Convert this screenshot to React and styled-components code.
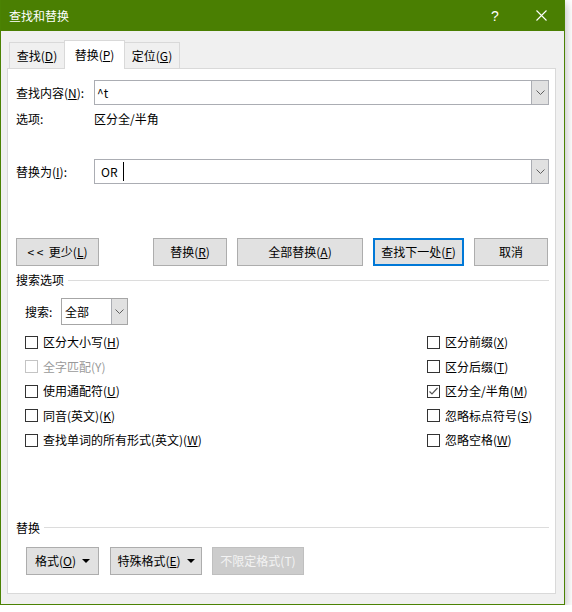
import React from "react";
import styled, { createGlobalStyle } from "styled-components";

const GlobalStyle = createGlobalStyle`
  html, body { margin: 0; padding: 0; background: #ffffff; }
  body {
    font-family: "Noto Sans CJK SC", "Noto Sans", sans-serif;
    font-size: 12px;
    color: #000;
  }
  * { box-sizing: border-box; }
`;

const Window = styled.div`
  width: 565px;
  height: 605px;
  background: #f0f0f0;
  border: 1px solid #4b8203;
  border-top: none;
  box-shadow: 1px 3px 9px rgba(0, 0, 0, 0.28);
  display: flex;
  flex-direction: column;
`;

const TitleBar = styled.div`
  height: 31px;
  background: #4a7f02;
  color: #fff;
  display: flex;
  align-items: center;
  padding-left: 8px;
  font-size: 12px;
  line-height: 16px;
`;

const TitleText = styled.div`
  flex: 1;
`;

const CtrlButton = styled.div`
  width: 46px;
  height: 31px;
  display: flex;
  align-items: center;
  justify-content: center;
  font-family: "Liberation Sans", "DejaVu Sans", sans-serif;
  font-size: 14px;
  color: #fff;
`;

const Tabs = styled.div`
  display: flex;
  align-items: flex-end;
  height: 28px;
  margin: 9px 0 0 8px;
`;

const Tab = styled.div`
  width: ${(p) => p.$w}px;
  height: ${(p) => (p.$active ? 29 : 26)}px;
  margin-bottom: ${(p) => (p.$active ? -1 : 0)}px;
  background: ${(p) => (p.$active ? "#ffffff" : "#f0f0f0")};
  border: 1px solid #d9d9d9;
  border-bottom: none;
  margin-left: ${(p) => (p.$first ? 0 : -1)}px;
  position: relative;
  z-index: ${(p) => (p.$active ? 2 : 1)};
  display: flex;
  align-items: center;
  justify-content: center;
  padding-top: ${(p) => (p.$active ? 0 : 1)}px;
  line-height: 16px;
`;

const Panel = styled.div`
  margin: 0 8px 0 6px;
  height: 526px;
  background: #fff;
  border: 1px solid #d9d9d9;
  padding: 11px 6px 0 8px;
  display: flex;
  flex-direction: column;
  position: relative;
  z-index: 1;
`;

const FieldRow = styled.div`
  display: flex;
  align-items: center;
  height: 25px;
  margin-top: ${(p) => p.$mt || 0}px;
`;

const Label = styled.div`
  width: 78px;
  line-height: 16px;
  flex: none;
`;

const Combo = styled.div`
  flex: 1;
  height: 25px;
  border: 1px solid #abadb3;
  background: #fff;
  display: flex;
`;

const ComboText = styled.div`
  flex: 1;
  display: flex;
  align-items: center;
  padding-left: ${(p) => p.$pl}px;
  line-height: 16px;
`;

const Caret = styled.span`
  display: inline-block;
  width: 1px;
  height: 19px;
  background: #000;
  margin-left: 5px;
`;

const DropBtn = styled.div`
  width: ${(p) => p.$w || 17}px;
  background: #e1e1e1;
  border-left: 1px solid #abadb3;
  display: flex;
  align-items: center;
  justify-content: center;
`;

const OptionRow = styled.div`
  display: flex;
  align-items: center;
  height: 18px;
  margin-top: 5px;
  line-height: 16px;
`;

const ButtonRow = styled.div`
  display: flex;
  height: ${(p) => p.$h}px;
  margin-top: ${(p) => p.$mt}px;
  padding-left: ${(p) => p.$pl || 0}px;
`;

const Button = styled.div`
  width: ${(p) => p.$w}px;
  height: 100%;
  margin-left: ${(p) => p.$ml || 0}px;
  background: ${(p) => (p.$disabled ? "#cccccc" : "#e1e1e1")};
  border: ${(p) =>
    p.$focus ? "2px solid #0078d7" : p.$disabled ? "1px solid #bfbfbf" : "1px solid #adadad"};
  color: ${(p) => (p.$disabled ? "#f3f3f3" : "#000")};
  display: flex;
  align-items: center;
  justify-content: center;
  gap: 6px;
  line-height: 16px;
  white-space: nowrap;
`;

const ButtonLabel = styled.span`
  white-space: pre;
`;

const Triangle = styled.span`
  width: 0;
  height: 0;
  border-left: 4px solid transparent;
  border-right: 4px solid transparent;
  border-top: 4px solid #000;
`;

const Section = styled.div`
  display: flex;
  align-items: center;
  gap: 4px;
  height: 16px;
  margin-top: ${(p) => p.$mt}px;
  line-height: 16px;
`;

const Rule = styled.div`
  flex: 1;
  height: 1px;
  background: #dcdcdc;
`;

const SearchRow = styled.div`
  display: flex;
  align-items: center;
  height: 27px;
  margin-top: 10px;
  padding-left: 9px;
`;

const SearchLabel = styled.div`
  width: 36px;
  line-height: 16px;
`;

const Select = styled.div`
  width: 67px;
  height: 27px;
  border: 1px solid #a6a6a6;
  display: flex;
  background: #fff;
`;

const Columns = styled.div`
  display: flex;
  margin-top: 5px;
  padding-left: 9px;
`;

const Column = styled.div`
  width: ${(p) => p.$w}px;
  display: flex;
  flex-direction: column;
`;

const CheckItem = styled.div`
  display: flex;
  align-items: center;
  gap: 5px;
  height: 24.5px;
  line-height: 16px;
  color: ${(p) => (p.$disabled ? "#9a9a9a" : "#000")};
`;

const Box = styled.span`
  width: 13px;
  height: 13px;
  border: 1px solid ${(p) => (p.$disabled ? "#c4c4c4" : "#333333")};
  background: #fff;
  display: flex;
  align-items: center;
  justify-content: center;
  flex: none;
`;

const Chevron = () => (
  <svg width="9" height="5" viewBox="0 0 9 5">
    <polyline points="0.5,0.5 4.5,4.5 8.5,0.5" fill="none" stroke="#5f5f5f" strokeWidth="1" />
  </svg>
);

const Check = ({ checked, disabled, children }) => (
  <CheckItem $disabled={disabled}>
    <Box $disabled={disabled}>
      {checked && (
        <svg width="11" height="11" viewBox="0 0 11 11">
          <polyline points="1.5,5.5 4,8 9.5,2" fill="none" stroke="#555" strokeWidth="1.2" />
        </svg>
      )}
    </Box>
    <span>{children}</span>
  </CheckItem>
);

export default function App() {
  return (
    <>
      <GlobalStyle />
      <Window>
        <TitleBar>
          <TitleText>查找和替换</TitleText>
          <CtrlButton>?</CtrlButton>
          <CtrlButton>
            <svg width="11" height="11" viewBox="0 0 11 11">
              <path d="M0.5 0.5 L10.5 10.5 M10.5 0.5 L0.5 10.5" stroke="#fff" strokeWidth="1.1" />
            </svg>
          </CtrlButton>
        </TitleBar>
        <Tabs>
          <Tab $w={56} $first>
            <span>
              查找(<u>D</u>)
            </span>
          </Tab>
          <Tab $w={61} $active>
            <span>
              替换(<u>P</u>)
            </span>
          </Tab>
          <Tab $w={56}>
            <span>
              定位(<u>G</u>)
            </span>
          </Tab>
        </Tabs>
        <Panel>
          <FieldRow>
            <Label>
              查找内容(<u>N</u>):
            </Label>
            <Combo>
              <ComboText $pl={2}>^t</ComboText>
              <DropBtn>
                <Chevron />
              </DropBtn>
            </Combo>
          </FieldRow>
          <OptionRow>
            <Label>选项:</Label>
            <span>区分全/半角</span>
          </OptionRow>
          <FieldRow $mt={31}>
            <Label>
              替换为(<u>I</u>):
            </Label>
            <Combo>
              <ComboText $pl={6}>
                OR
                <Caret />
              </ComboText>
              <DropBtn>
                <Chevron />
              </DropBtn>
            </Combo>
          </FieldRow>
          <ButtonRow $mt={54} $h={28}>
            <Button $w={83}>
              <ButtonLabel>
                {"< <  更少("}
                <u>L</u>)
              </ButtonLabel>
            </Button>
            <Button $w={74} $ml={54}>
              <ButtonLabel>
                替换(<u>R</u>)
              </ButtonLabel>
            </Button>
            <Button $w={126} $ml={10}>
              <ButtonLabel>
                全部替换(<u>A</u>)
              </ButtonLabel>
            </Button>
            <Button $w={91} $ml={10} $focus>
              <ButtonLabel>
                查找下一处(<u>F</u>)
              </ButtonLabel>
            </Button>
            <Button $w={74} $ml={10}>
              <ButtonLabel>取消</ButtonLabel>
            </Button>
          </ButtonRow>
          <Section $mt={6}>
            <span>搜索选项</span>
            <Rule />
          </Section>
          <SearchRow>
            <SearchLabel>搜索:</SearchLabel>
            <Select>
              <ComboText $pl={3}>全部</ComboText>
              <DropBtn $w={16}>
                <Chevron />
              </DropBtn>
            </Select>
          </SearchRow>
          <Columns>
            <Column $w={402}>
              <Check>
                区分大小写(<u>H</u>)
              </Check>
              <Check disabled>全字匹配(Y)</Check>
              <Check>
                使用通配符(<u>U</u>)
              </Check>
              <Check>
                同音(英文)(<u>K</u>)
              </Check>
              <Check>
                查找单词的所有形式(英文)(<u>W</u>)
              </Check>
            </Column>
            <Column $w={120}>
              <Check>
                区分前缀(<u>X</u>)
              </Check>
              <Check>
                区分后缀(<u>T</u>)
              </Check>
              <Check checked>
                区分全/半角(<u>M</u>)
              </Check>
              <Check>
                忽略标点符号(<u>S</u>)
              </Check>
              <Check>
                忽略空格(<u>W</u>)
              </Check>
            </Column>
          </Columns>
          <Section $mt={67}>
            <span>替换</span>
            <Rule />
          </Section>
          <ButtonRow $mt={11} $h={28} $pl={10}>
            <Button $w={73}>
              <ButtonLabel>
                格式(<u>O</u>)
              </ButtonLabel>
              <Triangle />
            </Button>
            <Button $w={92} $ml={11}>
              <ButtonLabel>
                特殊格式(<u>E</u>)
              </ButtonLabel>
              <Triangle />
            </Button>
            <Button $w={92} $ml={10} $disabled>
              <ButtonLabel>不限定格式(T)</ButtonLabel>
            </Button>
          </ButtonRow>
        </Panel>
      </Window>
    </>
  );
}
